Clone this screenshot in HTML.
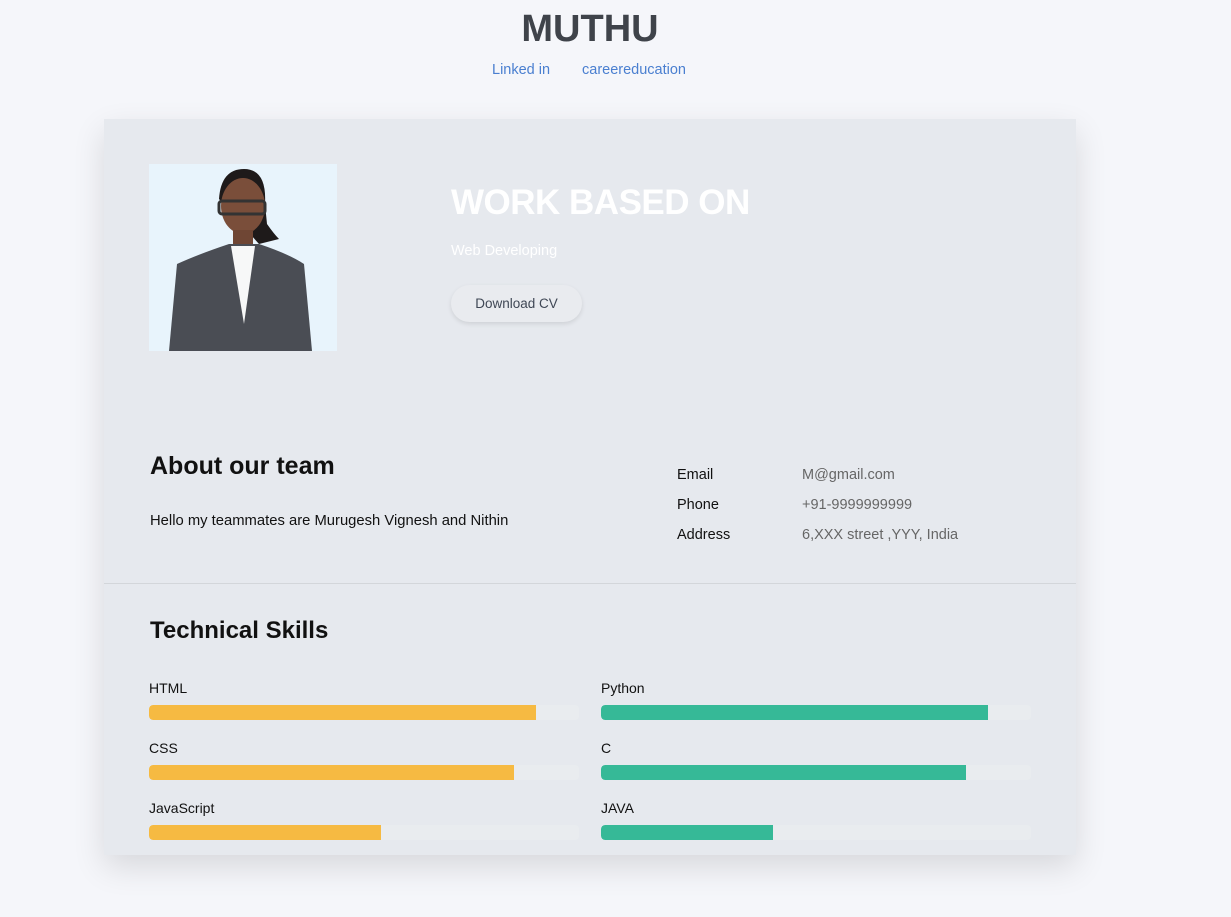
<!DOCTYPE html>
<html><head><style>
body{margin:0;background:#f5f6fa;font-family:"Liberation Sans",sans-serif;width:1231px;height:917px;position:relative;overflow:hidden}
.a{position:absolute}
.t{position:absolute;white-space:nowrap}
.track{position:absolute;height:15px;width:430px;background:#e9ecef;border-radius:4px;overflow:hidden}
.fill{height:100%;border-radius:4px 0 0 4px}
.y{background:#f6ba42}.g{background:#36b997}
.lab{position:absolute;font-size:14px;color:#111}
</style></head><body>
<div class="t" style="left:0;width:1180px;text-align:center;top:8px;font-size:38px;font-weight:bold;color:#3f434a">MUTHU</div>
<div class="t" style="left:492px;top:62px;font-size:14.5px;color:#4a7fd0">Linked in</div>
<div class="t" style="left:582px;top:62px;font-size:14.5px;color:#4a7fd0">careereducation</div>
<div class="a" style="left:104px;top:119px;width:972px;height:736px;background:#e6e9ee;box-shadow:0 12px 30px rgba(0,0,0,0.12)">
</div>
<div class="a" style="left:149px;top:164px;width:188px;height:187px;background:#e8f4fc;overflow:hidden">
 <svg width="188" height="187" viewBox="0 0 188 187">
  <path d="M70 35 Q72 5 95 5 Q118 5 116 40 L118 60 Q125 70 130 75 L110 80 Z" fill="#1e1a1a"/>
  <ellipse cx="94" cy="42" rx="22" ry="28" fill="#7a4e3a"/>
  <rect x="70" y="37" width="46" height="13" rx="3" fill="none" stroke="#333" stroke-width="3"/>
  <rect x="84" y="66" width="20" height="22" fill="#6f4634"/>
  <path d="M20 187 L28 100 Q50 90 80 80 L110 80 Q140 90 155 100 L163 187 Z" fill="#4a4d54"/>
  <path d="M82 82 L95 160 L106 82 Z" fill="#f7f8f8"/>
 </svg>
</div>
<div class="t" style="left:451px;top:183px;font-size:35px;font-weight:bold;color:#fff;letter-spacing:-0.5px">WORK BASED ON</div>
<div class="t" style="left:451px;top:243px;font-size:14.5px;color:#fff">Web Developing</div>
<div class="a" style="left:451px;top:285px;width:131px;height:37px;border-radius:19px;background:#e9ebef;box-shadow:0 2px 5px rgba(0,0,0,0.1);font-size:13.5px;color:#3f4755;text-align:center;line-height:37px">Download CV</div>
<div class="t" style="left:150px;top:452px;font-size:25px;font-weight:bold;color:#111">About our team</div>
<div class="t" style="left:150px;top:513px;font-size:14.8px;color:#111">Hello my teammates are Murugesh Vignesh and Nithin</div>
<div class="t" style="left:677px;top:467px;font-size:14.5px;color:#111">Email</div>
<div class="t" style="left:677px;top:497px;font-size:14.5px;color:#111">Phone</div>
<div class="t" style="left:677px;top:527px;font-size:14.5px;color:#111">Address</div>
<div class="t" style="left:802px;top:467px;font-size:14.5px;color:#666">M@gmail.com</div>
<div class="t" style="left:802px;top:497px;font-size:14.5px;color:#666">+91-9999999999</div>
<div class="t" style="left:802px;top:527px;font-size:14.5px;color:#666">6,XXX street ,YYY, India</div>
<div class="a" style="left:104px;top:583px;width:972px;height:1px;background:#d3d6da"></div>
<div class="t" style="left:150px;top:617px;font-size:24px;font-weight:bold;color:#111">Technical Skills</div>
<div class="lab" style="left:149px;top:680px">HTML</div>
<div class="track" style="left:149px;top:705px"><div class="fill y" style="width:387px"></div></div>
<div class="lab" style="left:149px;top:740px">CSS</div>
<div class="track" style="left:149px;top:765px"><div class="fill y" style="width:365px"></div></div>
<div class="lab" style="left:149px;top:800px">JavaScript</div>
<div class="track" style="left:149px;top:825px"><div class="fill y" style="width:232px"></div></div>
<div class="lab" style="left:601px;top:680px">Python</div>
<div class="track" style="left:601px;top:705px"><div class="fill g" style="width:387px"></div></div>
<div class="lab" style="left:601px;top:740px">C</div>
<div class="track" style="left:601px;top:765px"><div class="fill g" style="width:365px"></div></div>
<div class="lab" style="left:601px;top:800px">JAVA</div>
<div class="track" style="left:601px;top:825px"><div class="fill g" style="width:172px"></div></div>
</body></html>
